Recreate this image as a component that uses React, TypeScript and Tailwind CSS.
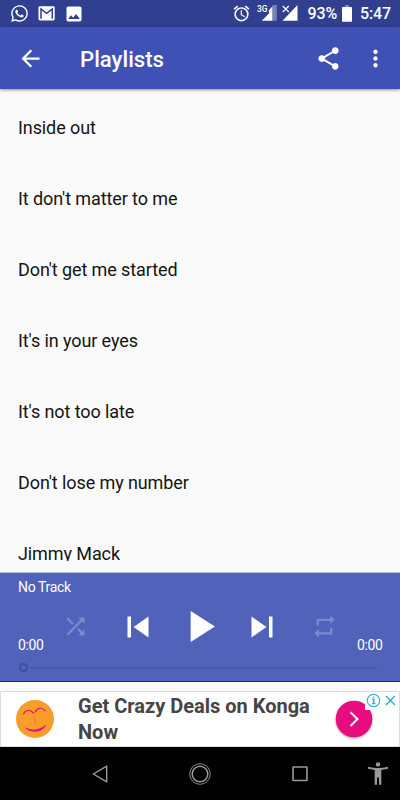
import {
  MdAccessAlarm,
  MdArrowBack,
  MdImage,
  MdMoreVert,
  MdPlayArrow,
  MdRepeat,
  MdShare,
  MdShuffle,
  MdSkipNext,
  MdSkipPrevious,
} from 'react-icons/md';
import { FaWhatsapp } from 'react-icons/fa';

const TRACKS = [
  'Inside out',
  "It don't matter to me",
  "Don't get me started",
  "It's in your eyes",
  "It's not too late",
  "Don't lose my number",
  'Jimmy Mack',
];

function StatusBar() {
  return (
    <div className="flex h-[27px] shrink-0 items-center bg-[#303f8f] pl-[10px] pr-[9px] text-white">
      <FaWhatsapp size={19} className="shrink-0" />
      <svg width="17" height="15" viewBox="0 0 17 15" className="ml-[9px] shrink-0">
        <rect x="0.5" y="0.2" width="16.2" height="14.2" rx="1.4" fill="#fff" />
        <path d="M3 12.8V3l5.7 4.4L14.3 3v9.8" fill="none" stroke="#303f8f" strokeWidth="1.5" />
      </svg>
      <MdImage size={20} className="ml-[8.5px] shrink-0" />
      <div className="flex-1" />
      <MdAccessAlarm size={19} className="shrink-0" />
      <svg width="20" height="17" viewBox="0 0 20 17" className="ml-[6.5px] shrink-0">
        <path d="M15.4 0h4.4v15.8h-4.4z" fill="#fff" opacity="0.35" />
        <path d="M4.8 15.8L15.4 5v10.8z" fill="#fff" />
        <path d="M15.4 5L12 8.6V4.9L15.4 1.5z" fill="#fff" />
        <text
          x="0"
          y="7.4"
          textLength="10.5"
          lengthAdjust="spacingAndGlyphs"
          fill="#fff"
          fontFamily="Roboto, sans-serif"
          fontSize="9.5"
          fontWeight="500"
        >
          3G
        </text>
      </svg>
      <svg width="17" height="17" viewBox="0 0 17 17" className="ml-[5px] shrink-0">
        <path d="M0.5 15.8L15.5 0v15.8z" fill="#fff" />
        <path d="M0 0h8v8H0z" fill="#303f8f" />
        <path d="M0.8 1l6 6M6.8 1l-6 6" stroke="#fff" strokeWidth="1.1" />
      </svg>
      <span className="ml-[8.5px] text-[16px] leading-none font-medium tracking-[-0.15px]">93%</span>
      <svg width="10" height="17" viewBox="0 0 10 17" className="ml-[5px] shrink-0">
        <path d="M3 0h4v2H3z" fill="#fff" opacity="0.4" />
        <rect y="2" width="10" height="14.8" rx="0.8" fill="#fff" />
      </svg>
      <span className="ml-[8px] text-[16px] leading-none font-medium tracking-[-0.15px]">5:47</span>
    </div>
  );
}

function AppBar() {
  return (
    <header className="relative z-10 flex h-[62px] shrink-0 items-center bg-[#3f51b5] pr-[11px] pl-[17px] text-white shadow-[0_1px_3px_rgba(0,0,0,0.45)]">
      <MdArrowBack size={27} />
      <h1 className="ml-[36px] flex-1 pt-[2px] text-[22.2px] leading-none font-medium">Playlists</h1>
      <MdShare size={27} />
      <MdMoreVert size={27} className="ml-[20px]" />
    </header>
  );
}

function TrackList() {
  return (
    <ul className="h-[472px] shrink-0 overflow-hidden pt-[3px]">
      {TRACKS.map((track) => (
        <li key={track} className="flex h-[71px] items-center pl-[18px] text-[18px] tracking-[-0.1px] text-[#141414]">
          {track}
        </li>
      ))}
    </ul>
  );
}

function Player() {
  return (
    <section className="mt-[11px] flex h-[110px] shrink-0 flex-col border-t border-b border-t-[#b9bfdc] border-b-[#0d2896] bg-[#5162bb] bg-clip-padding text-white">
      <p className="mt-[6px] pl-[18px] text-[14px] leading-4 tracking-[-0.35px]">No Track</p>
      <div className="flex h-[63px] items-center pl-[62px]">
        <MdShuffle size={27} className="text-[#7c89cc]" />
        <MdSkipPrevious size={42} className="ml-[27.5px]" />
        <MdPlayArrow size={53} className="ml-[14.5px]" />
        <MdSkipNext size={42} className="ml-[15px]" />
        <MdRepeat size={27} className="ml-[28px] text-[#7c89cc]" />
      </div>
      <div className="-mt-[21px] flex justify-between pr-[17.5px] pl-[18px] text-[14px] leading-4 tracking-[-0.4px]">
        <span>0:00</span>
        <span>0:00</span>
      </div>
      <div className="mt-[10px] flex items-center pr-[23px] pl-[19px]">
        <div className="h-[9px] w-[9px] rounded-full border-2 border-[#3f4f9c]" />
        <div className="ml-[2px] h-[2px] flex-1 bg-[#4858a8]" />
      </div>
    </section>
  );
}

function AdBanner() {
  return (
    <aside className="relative mt-[9px] flex h-[56px] shrink-0 border border-[#dcdcdc] bg-white">
      <svg width="38" height="38" viewBox="0 0 38 38" className="mt-[8px] ml-[15px] shrink-0">
        <circle cx="19" cy="19" r="19" fill="#f99d2a" />
        <g fill="none" stroke="#e5127d" strokeLinecap="round">
          <path d="M7.5 14C9 9.8 14 9.2 17.5 13" strokeWidth="1.2" />
          <path d="M19.3 12C20.5 7.8 26 6.8 29.3 10.8" strokeWidth="1.2" />
          <path d="M18.5 17.5Q19.8 20 19.3 23.5" strokeWidth="0.4" />
        </g>
        <path d="M8.8 27.3Q20 33.2 30.6 24.2Q27.5 31.6 18.5 31.8Q11.5 31.5 8.8 27.3z" fill="#e5127d" />
      </svg>
      <p className="mt-px ml-[24px] w-[250px] text-[20px] leading-[26px] font-bold text-[#454545]">
        Get Crazy Deals on Konga Now
      </p>
      <svg width="44" height="44" viewBox="0 0 44 44" className="absolute top-[6px] left-[331px] overflow-visible">
        <circle cx="22" cy="21" r="18.3" fill="#e80c80" className="drop-shadow-[0_1px_1px_rgba(0,0,0,0.35)]" />
        <path d="M18.5 14.2L25.5 21l-7 7" fill="none" stroke="#fff" strokeWidth="2" />
      </svg>
      <svg width="34" height="18" viewBox="0 0 34 18" className="absolute top-0 right-0">
        <path d="M0 0h34v18H0z" fill="#fff" />
        <circle cx="8.5" cy="8.5" r="6.2" fill="none" stroke="#20add3" strokeWidth="1.1" />
        <path d="M7.3 7.5h1.5v4M7 11.6h3.4M8.5 4.4v1.600" fill="none" stroke="#20add3" strokeWidth="1.4" />
        <path d="M21 4l9 9M30 4l-9 9" stroke="#20add3" strokeWidth="1.4" />
      </svg>
    </aside>
  );
}

function NavBar() {
  return (
    <nav className="flex h-[53px] shrink-0 items-center bg-black pl-[92px] text-[#999]">
      <svg width="16" height="18" viewBox="0 0 16 18" fill="none" stroke="currentColor" strokeWidth="1.4">
        <path d="M1.3 9L14.7 1.2v15.6z" strokeLinejoin="round" />
      </svg>
      <svg width="22" height="22" viewBox="0 0 22 22" fill="none" stroke="currentColor" className="ml-[81px]">
        <circle cx="11" cy="11" r="10.3" strokeWidth="0.9" />
        <circle cx="11" cy="11" r="7.8" strokeWidth="1.5" />
      </svg>
      <svg width="16" height="16" viewBox="0 0 16 16" fill="none" stroke="currentColor" className="ml-[81px]">
        <rect x="1" y="1" width="14" height="13.5" rx="0.5" strokeWidth="1.6" />
      </svg>
      <svg width="20" height="23" viewBox="0 0 20 23" fill="currentColor" className="ml-[60px]">
        <circle cx="10" cy="2.4" r="2.2" />
        <path d="M0 4.7Q10 7.2 20 4.7V6.7L13.3 7.9V22.8H11V15.5H9V22.8H6.7V7.9L0 6.7z" />
      </svg>
    </nav>
  );
}

export default function App() {
  return (
    <div className="flex h-[800px] w-[400px] flex-col overflow-hidden bg-[#fafafa] font-['Roboto',sans-serif]">
      <StatusBar />
      <AppBar />
      <TrackList />
      <Player />
      <AdBanner />
      <NavBar />
    </div>
  );
}
